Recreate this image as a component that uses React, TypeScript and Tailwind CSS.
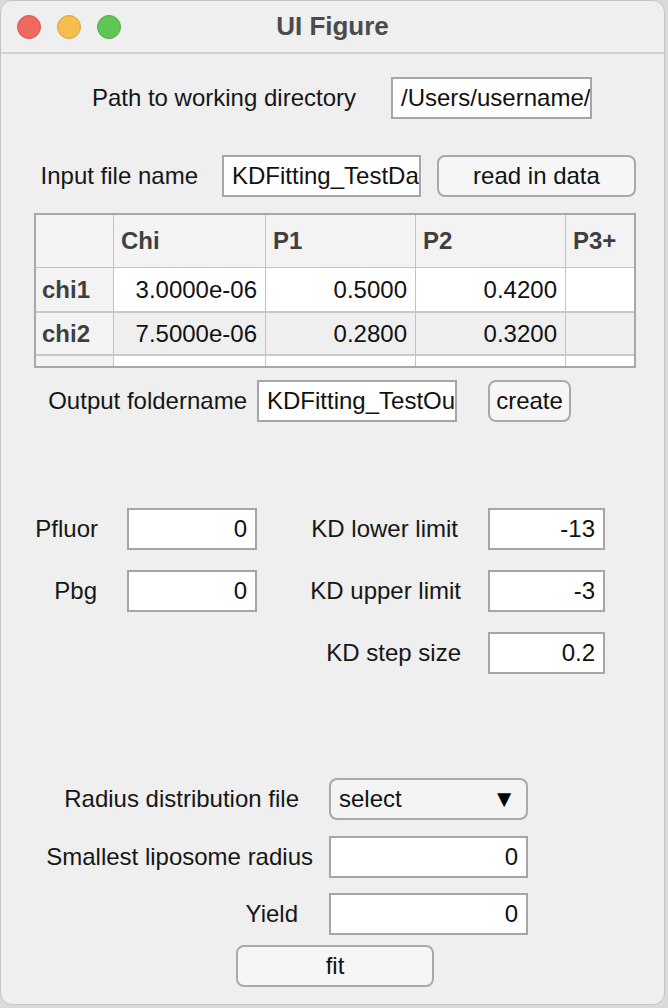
const font = { fontFamily: '"Liberation Sans", Arial, sans-serif' };

const Field = ({
  value,
  w,
  right,
}: {
  value: string;
  w: string;
  right?: boolean;
}) => (
  <div
    className={`${w} h-[42px] shrink-0 bg-white border-2 border-[#a6a6a6] flex items-center overflow-hidden whitespace-nowrap text-[24px] text-[#111] ${
      right ? "justify-end pr-[8px]" : "pl-[8px]"
    }`}
  >
    {value}
  </div>
);

const Btn = ({ label, w }: { label: string; w: string }) => (
  <div
    className={`${w} h-[42px] shrink-0 rounded-[8px] border-2 border-[#a9a9a9] bg-[#f6f6f6] flex items-center justify-center text-[24px] text-[#111]`}
  >
    {label}
  </div>
);

const Label = ({ text, w }: { text: string; w: string }) => (
  <div className={`${w} shrink-0 text-right text-[24px] text-[#161616] whitespace-nowrap`}>
    {text}
  </div>
);

const cols = ["w-[78px]", "w-[152px]", "w-[150px]", "w-[150px]", "w-[68px]"];

const rows = [
  { name: "chi1", vals: ["3.0000e-06", "0.5000", "0.4200", ""], bg: "bg-white" },
  { name: "chi2", vals: ["7.5000e-06", "0.2800", "0.3200", ""], bg: "bg-[#efefef]" },
];

const App = () => {
  return (
    <div className="w-[668px] h-[1008px] bg-[#dadada]" style={font}>
      <div className="w-[665px] h-[1005px] bg-[#efefef] rounded-[12px] border border-[#c4c4c4] overflow-hidden flex flex-col">
        {/* title bar */}
        <div className="h-[53px] shrink-0 border-b-2 border-[#d2d2d2] flex items-center relative">
          <div className="flex gap-[16px] pl-[16px]">
            <span className="w-[24px] h-[24px] rounded-full bg-[#ee6a5f] border border-[#d9574d]" />
            <span className="w-[24px] h-[24px] rounded-full bg-[#f5bf4f] border border-[#d8a43d]" />
            <span className="w-[24px] h-[24px] rounded-full bg-[#61c554] border border-[#4ead42]" />
          </div>
          <div className="absolute inset-0 flex items-center justify-center text-[26px] font-bold text-[#4b4b4b]">
            UI Figure
          </div>
        </div>

        {/* working dir */}
        <div className="flex items-center mt-[23px]">
          <Label text="Path to working directory" w="w-[355px]" />
          <div className="ml-[35px]">
            <Field value="/Users/username/Documents/KDFitting" w="w-[201px]" />
          </div>
        </div>

        {/* input file */}
        <div className="flex items-center mt-[36px]">
          <Label text="Input file name" w="w-[197px]" />
          <div className="ml-[24px]">
            <Field value="KDFitting_TestData.xlsx" w="w-[199px]" />
          </div>
          <div className="ml-[16px]">
            <Btn label="read in data" w="w-[199px]" />
          </div>
        </div>

        {/* table */}
        <div className="ml-[33px] mt-[16px] w-[602px] border-2 border-[#a8a8a8] bg-white">
          <div className="flex h-[53px] bg-[#f3f3f3] border-b border-[#c2c2c2]">
            {["", "Chi", "P1", "P2", "P3+"].map((h, i) => (
              <div
                key={i}
                className={`${cols[i]} shrink-0 flex items-center pl-[7px] text-[24px] font-bold text-[#3f3f3f] ${
                  i < 4 ? "border-r border-[#c2c2c2]" : ""
                }`}
              >
                {h}
              </div>
            ))}
          </div>
          {rows.map((r, ri) => (
            <div
              key={r.name}
              className={`flex ${ri === 0 ? "h-[45px]" : "h-[43px]"} border-b-2 border-[#c8c8c8]`}
            >
              <div className="w-[78px] shrink-0 bg-[#f3f3f3] border-r border-[#c2c2c2] flex items-center pl-[6px] text-[24px] font-bold text-[#3f3f3f]">
                {r.name}
              </div>
              {r.vals.map((v, i) => (
                <div
                  key={i}
                  className={`${cols[i + 1]} shrink-0 ${r.bg} flex items-center justify-end pr-[8px] text-[24px] text-[#111] ${
                    i < 3 ? "border-r border-[#c2c2c2]" : ""
                  }`}
                >
                  {v}
                </div>
              ))}
            </div>
          ))}
          <div className="flex h-[10px]">
            <div className="w-[78px] shrink-0 bg-[#f3f3f3] border-r border-[#c2c2c2]" />
            {[0, 1, 2, 3].map((i) => (
              <div
                key={i}
                className={`${cols[i + 1]} shrink-0 bg-white ${i < 3 ? "border-r border-[#c2c2c2]" : ""}`}
              />
            ))}
          </div>
        </div>

        {/* output folder */}
        <div className="flex items-center mt-[12px]">
          <Label text="Output foldername" w="w-[246px]" />
          <div className="ml-[10px]">
            <Field value="KDFitting_TestOutput" w="w-[200px]" />
          </div>
          <div className="ml-[31px]">
            <Btn label="create" w="w-[83px]" />
          </div>
        </div>

        {/* parameters */}
        <div className="flex items-center mt-[86px]">
          <Label text="Pfluor" w="w-[97px]" />
          <div className="ml-[29px]">
            <Field value="0" w="w-[130px]" right />
          </div>
          <Label text="KD lower limit" w="w-[201px]" />
          <div className="ml-[30px]">
            <Field value="-13" w="w-[117px]" right />
          </div>
        </div>
        <div className="flex items-center mt-[20px]">
          <Label text="Pbg" w="w-[96px]" />
          <div className="ml-[30px]">
            <Field value="0" w="w-[130px]" right />
          </div>
          <Label text="KD upper limit" w="w-[204px]" />
          <div className="ml-[27px]">
            <Field value="-3" w="w-[117px]" right />
          </div>
        </div>
        <div className="flex items-center mt-[20px]">
          <Label text="KD step size" w="w-[460px]" />
          <div className="ml-[27px]">
            <Field value="0.2" w="w-[117px]" right />
          </div>
        </div>

        {/* radius */}
        <div className="flex items-center mt-[104px]">
          <Label text="Radius distribution file" w="w-[298px]" />
          <div className="ml-[30px] w-[199px] h-[42px] rounded-[8px] border-2 border-[#a9a9a9] bg-[#f4f4f4] flex items-center justify-between pl-[8px] pr-[10px] text-[24px] text-[#111]">
            <span>select</span>
            <span className="text-[24px] leading-none text-black">▼</span>
          </div>
        </div>
        <div className="flex items-center mt-[16px]">
          <Label text="Smallest liposome radius" w="w-[312px]" />
          <div className="ml-[16px]">
            <Field value="0" w="w-[199px]" right />
          </div>
        </div>
        <div className="flex items-center mt-[15px]">
          <Label text="Yield" w="w-[297px]" />
          <div className="ml-[31px]">
            <Field value="0" w="w-[199px]" right />
          </div>
        </div>
        <div className="flex mt-[10px] ml-[235px]">
          <Btn label="fit" w="w-[198px]" />
        </div>
      </div>
    </div>
  );
};

export default App;
